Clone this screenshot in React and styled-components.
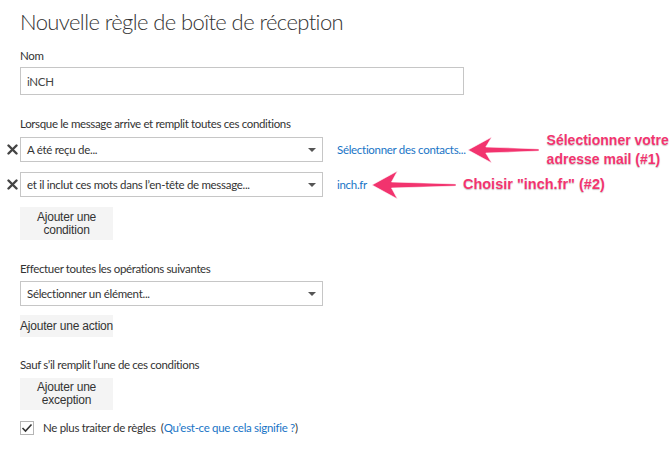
import React from 'react';
import styled, { createGlobalStyle } from 'styled-components';

const Global = createGlobalStyle`
  html, body { margin: 0; padding: 0; background: #fff; }
  body { font-family: Lato, "Noto Sans", sans-serif; color: #333; }
`;

const Page = styled.div`
  width: 670px;
  height: 465px;
  box-sizing: border-box;
  padding: 7px 0 0 20px;
  overflow: hidden;
`;

const Title = styled.h1`
  margin: 0 0 11px;
  font-family: Lato, sans-serif;
  font-weight: 300;
  font-size: 22px;
  line-height: 30px;
  letter-spacing: -0.6px;
  color: #333;
`;

const Label = styled.div`
  font-size: 11.5px;
  letter-spacing: -0.35px;
  line-height: 16px;
  color: #333;
  white-space: nowrap;
  margin-top: ${p => p.$top || 0}px;
  margin-bottom: ${p => p.$bottom || 4}px;
`;

const TextInput = styled.div`
  width: 444px;
  height: 28px;
  box-sizing: border-box;
  border: 1px solid #c6c6c6;
  padding-left: 6px;
  display: flex;
  align-items: center;
  font-size: 11.5px;
  letter-spacing: -0.3px;
  color: #444;
`;

const Row = styled.div`
  display: flex;
  align-items: center;
  margin-left: -20px;
  height: 25px;
  margin-bottom: 10px;
`;

const Remove = styled.div`
  width: 20px;
  display: flex;
  justify-content: center;
  padding-left: 4px;
  box-sizing: border-box;
`;

const Select = styled.div`
  width: 303px;
  height: 25px;
  box-sizing: border-box;
  border: 1px solid #c6c6c6;
  padding: 0 6px 0 6px;
  display: flex;
  align-items: center;
  justify-content: space-between;
  font-size: 11.5px;
  letter-spacing: -0.3px;
  color: #333;
  white-space: nowrap;
  margin-bottom: ${p => p.$bottom || 0}px;
`;

const Caret = styled.span`
  width: 0;
  height: 0;
  border-left: 4px solid transparent;
  border-right: 4px solid transparent;
  border-top: 4px solid #555;
`;

const Link = styled.a`
  color: #1874c6;
  font-size: 11.5px;
  letter-spacing: -0.3px;
  text-decoration: none;
  white-space: nowrap;
  margin-left: ${p => p.$left || 0}px;
  margin-right: ${p => p.$right || 0}px;
`;

const Note = styled.div`
  font-family: "Liberation Sans", Arial, sans-serif;
  font-weight: 700;
  font-size: ${p => p.$size}px;
  line-height: 19px;
  color: #f2336e;
  white-space: nowrap;
  text-shadow: 0 0 1px #fff, 0 1px 1px rgba(0, 0, 0, 0.25);
  margin-left: ${p => p.$left || 0}px;
`;

const Button = styled.div`
  width: 93px;
  height: ${p => p.$h}px;
  background: #f4f4f4;
  display: flex;
  align-items: center;
  justify-content: center;
  text-align: center;
  font-family: "Liberation Sans", Arial, sans-serif;
  font-size: 12px;
  line-height: 13px;
  color: #333;
  white-space: nowrap;
  letter-spacing: -0.2px;
`;

const CheckRow = styled.div`
  display: flex;
  align-items: center;
  margin-top: 10px;
  font-size: 11.5px;
  letter-spacing: -0.3px;
  line-height: 16px;
  color: #333;
  white-space: nowrap;
`;

const Box = styled.span`
  width: 14px;
  height: 14px;
  box-sizing: border-box;
  border: 1px solid #b5b5b5;
  display: flex;
  align-items: center;
  justify-content: center;
  margin-right: 9px;
`;

const Cross = () => (
  <svg width="11" height="11" viewBox="0 0 11 11">
    <path d="M1.5 1.5 L9.5 9.5 M9.5 1.5 L1.5 9.5" stroke="#444" strokeWidth="2.4" strokeLinecap="round" />
  </svg>
);

const Arrow = ({ w, h }) => {
  const c = h / 2;
  const hw = h * 0.85;
  return (
    <svg width={w} height={h} viewBox={`0 0 ${w} ${h}`}>
      <path
        d={`M0 ${c} L${hw} 1 L${hw - 6} ${c - 3} L${w} ${c - 1.1} L${w} ${c + 1.1} L${hw - 6} ${c + 3} L${hw} ${h - 1} Z`}
        fill="#f2336e"
        stroke="#fff"
        strokeWidth="0.6"
        strokeLinejoin="round"
      />
    </svg>
  );
};

export default function App() {
  return (
    <Page>
      <Global />
      <Title>Nouvelle règle de boîte de réception</Title>

      <Label $bottom={3}>Nom</Label>
      <TextInput>iNCH</TextInput>

      <Label $top={21} $bottom={5}>Lorsque le message arrive et remplit toutes ces conditions</Label>
      <Row>
        <Remove><Cross /></Remove>
        <Select>A été reçu de...<Caret /></Select>
        <Link $left={14} $right={2}>Sélectionner des contacts...</Link>
        <Arrow w={71} h={28} />
        <Note $size={14} $left={8}>Sélectionner votre<br />adresse mail (#1)</Note>
      </Row>
      <Row>
        <Remove><Cross /></Remove>
        <Select>et il inclut ces mots dans l’en-tête de message...<Caret /></Select>
        <Link $left={14} $right={5}>inch.fr</Link>
        <Arrow w={84} h={30} />
        <Note $size={14.5} $left={7}>Choisir "inch.fr" (#2)</Note>
      </Row>
      <Button $h={33}>Ajouter une<br />condition</Button>

      <Label $top={21} $bottom={4}>Effectuer toutes les opérations suivantes</Label>
      <Select $bottom={9}>Sélectionner un élément...<Caret /></Select>
      <Button $h={22}>Ajouter une action</Button>

      <Label $top={20} $bottom={5}>Sauf s’il remplit l’une de ces conditions</Label>
      <Button $h={32}>Ajouter une<br />exception</Button>

      <CheckRow>
        <Box>
          <svg width="12" height="10" viewBox="0 0 12 10">
            <path d="M1.5 5 L4.5 8 L10.5 1.5" fill="none" stroke="#333" strokeWidth="1.6" />
          </svg>
        </Box>
        Ne plus traiter de règles&nbsp;&nbsp;(<Link>Qu’est-ce que cela signifie ?</Link>)
      </CheckRow>
    </Page>
  );
}
